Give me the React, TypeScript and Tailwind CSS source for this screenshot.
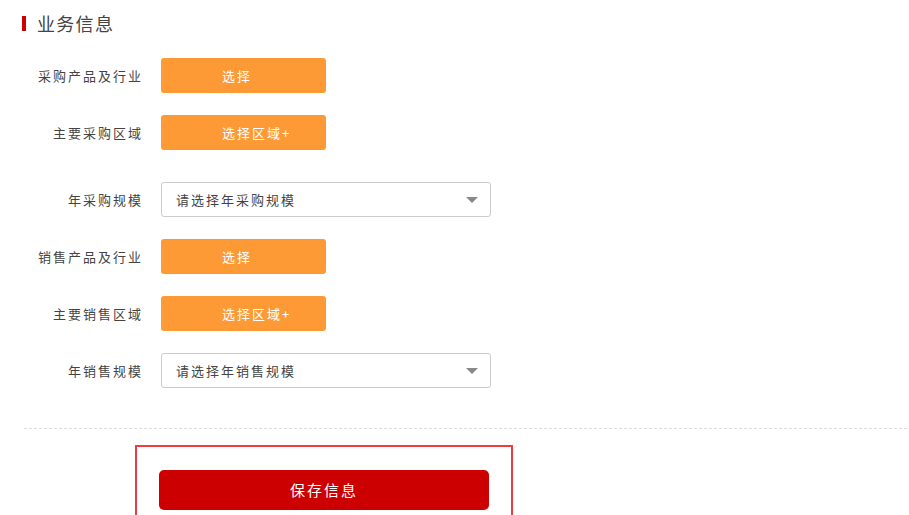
import React from "react";

const font = { fontFamily: '"Noto Sans CJK SC", "Noto Sans", sans-serif' };

function Label({ text }: { text: string }) {
  return (
    <div className="w-[143px] shrink-0 text-right text-[13px] font-normal leading-[20px] tracking-[2px] text-[#444]">
      {text}
    </div>
  );
}

function OrangeBtn({ text }: { text: string }) {
  return (
    <div className="flex h-[35px] w-[165px] items-center rounded-[3px] bg-[#fe9a35] pl-[61px] text-[13px] font-normal tracking-[2px] text-white">
      {text}
    </div>
  );
}

function Select({ text }: { text: string }) {
  return (
    <div className="flex h-[35px] w-[330px] items-center justify-between rounded-[3px] border border-[#cccccc] bg-white pl-[14px] pr-[12px] text-[13px] font-normal tracking-[2px] text-[#444]">
      <span>{text}</span>
      <span className="h-0 w-0 border-l-[6px] border-r-[6px] border-t-[6px] border-l-transparent border-r-transparent border-t-[#888]" />
    </div>
  );
}

function Row({ label, children, extra }: { label: string; children: React.ReactNode; extra?: string }) {
  return (
    <div className={`flex items-center gap-[18px] ${extra ?? ""}`}>
      <Label text={label} />
      {children}
    </div>
  );
}

export default function App() {
  return (
    <div className="h-[515px] w-[909px] overflow-hidden bg-white" style={font}>
      <div className="flex items-center pl-[22px] pt-[11px]">
        <span className="h-[15px] w-[4px] bg-[#cc0000]" />
        <span className="ml-[11px] text-[18px] font-normal leading-[24px] tracking-[1.3px] text-[#444]">业务信息</span>
      </div>
      <div className="mt-[23px] flex flex-col gap-[22px]">
        <Row label="采购产品及行业"><OrangeBtn text="选择" /></Row>
        <Row label="主要采购区域"><OrangeBtn text="选择区域+" /></Row>
        <Row label="年采购规模" extra="mt-[10px]"><Select text="请选择年采购规模" /></Row>
        <Row label="销售产品及行业"><OrangeBtn text="选择" /></Row>
        <Row label="主要销售区域"><OrangeBtn text="选择区域+" /></Row>
        <Row label="年销售规模"><Select text="请选择年销售规模" /></Row>
      </div>
      <div className="ml-[24px] mr-[2px] mt-[40px] border-t border-dashed border-[#dddddd]" />
      <div className="ml-[135px] mt-[16px] w-[378px] border-2 border-[#f03c3c] pb-[10px] pl-[22px] pt-[23px]">
        <div className="flex h-[40px] w-[330px] items-center justify-center rounded-[5px] bg-[#cc0000] text-[15px] tracking-[2px] text-white">
          保存信息
        </div>
      </div>
    </div>
  );
}
